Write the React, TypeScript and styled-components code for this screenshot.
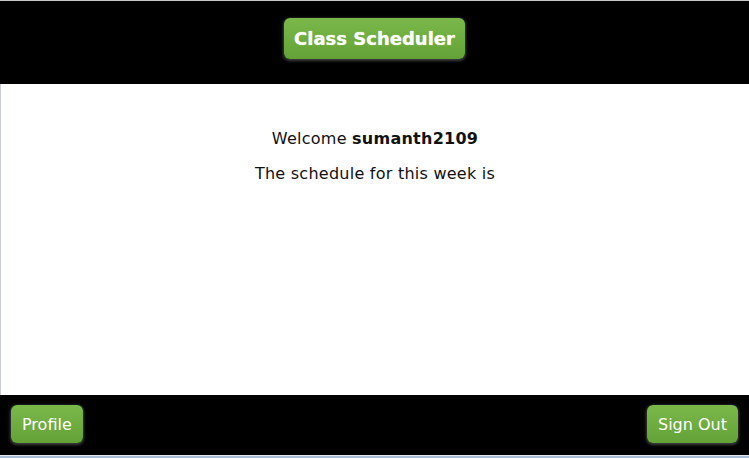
import React from "react";
import styled, { createGlobalStyle } from "styled-components";

const Global = createGlobalStyle`
  html, body { margin: 0; padding: 0; background: #ffffff; }
  body { font-family: "DejaVu Sans", Verdana, sans-serif; }
`;

const Page = styled.div`
  display: flex;
  flex-direction: column;
  height: 458px;
  width: 749px;
  border-top: 1px solid #c8c8c8;
  box-sizing: border-box;
`;

const Header = styled.header`
  height: 83px;
  background: #000;
  display: flex;
  justify-content: center;
  align-items: flex-start;
  padding-top: 17px;
  box-sizing: border-box;
`;

const Main = styled.main`
  flex: 1;
  background: #fff;
  border-left: 1px solid #c8ccd4;
  display: flex;
  flex-direction: column;
  align-items: center;
  padding-top: 45px;
  box-sizing: border-box;
  color: #111;
  font-size: 16px;
  letter-spacing: 0.25px;
`;

const Line = styled.p<{ $gap?: number }>`
  margin: 0 0 ${(p) => p.$gap ?? 0}px 0;
  line-height: 20px;
`;

const Footer = styled.footer`
  height: 60px;
  background: #000;
  display: flex;
  justify-content: space-between;
  align-items: flex-start;
  padding: 10px 11px 0 11px;
  box-sizing: border-box;
`;

const BottomEdge = styled.div`
  height: 3px;
  background: linear-gradient(#e4e8ee 0 1px, #a9bcd6 1px 3px);
`;

const Button = styled.button<{ $title?: boolean }>`
  font-family: "DejaVu Sans", Verdana, sans-serif;
  color: #fff;
  border: none;
  cursor: pointer;
  border-radius: 6px;
  background: linear-gradient(#7bb84a, #63a237);
  box-shadow: 0 1px 3px 1px rgba(90, 90, 90, 0.7);
  font-size: ${(p) => (p.$title ? "18px" : "16px")};
  font-weight: ${(p) => (p.$title ? 700 : 400)};
  height: ${(p) => (p.$title ? "41px" : "38px")};
  padding: ${(p) => (p.$title ? "0 10px" : "0 11px")};
  text-shadow: ${(p) => (p.$title ? "0 0 1px #d8f0b0" : "none")};
`;

export default function App() {
  return (
    <>
      <Global />
      <Page>
        <Header>
          <Button $title>Class Scheduler</Button>
        </Header>
        <Main>
          <Line $gap={15}>
            Welcome <b>sumanth2109</b>
          </Line>
          <Line>The schedule for this week is</Line>
        </Main>
        <Footer>
          <Button>Profile</Button>
          <Button>Sign Out</Button>
        </Footer>
        <BottomEdge />
      </Page>
    </>
  );
}
